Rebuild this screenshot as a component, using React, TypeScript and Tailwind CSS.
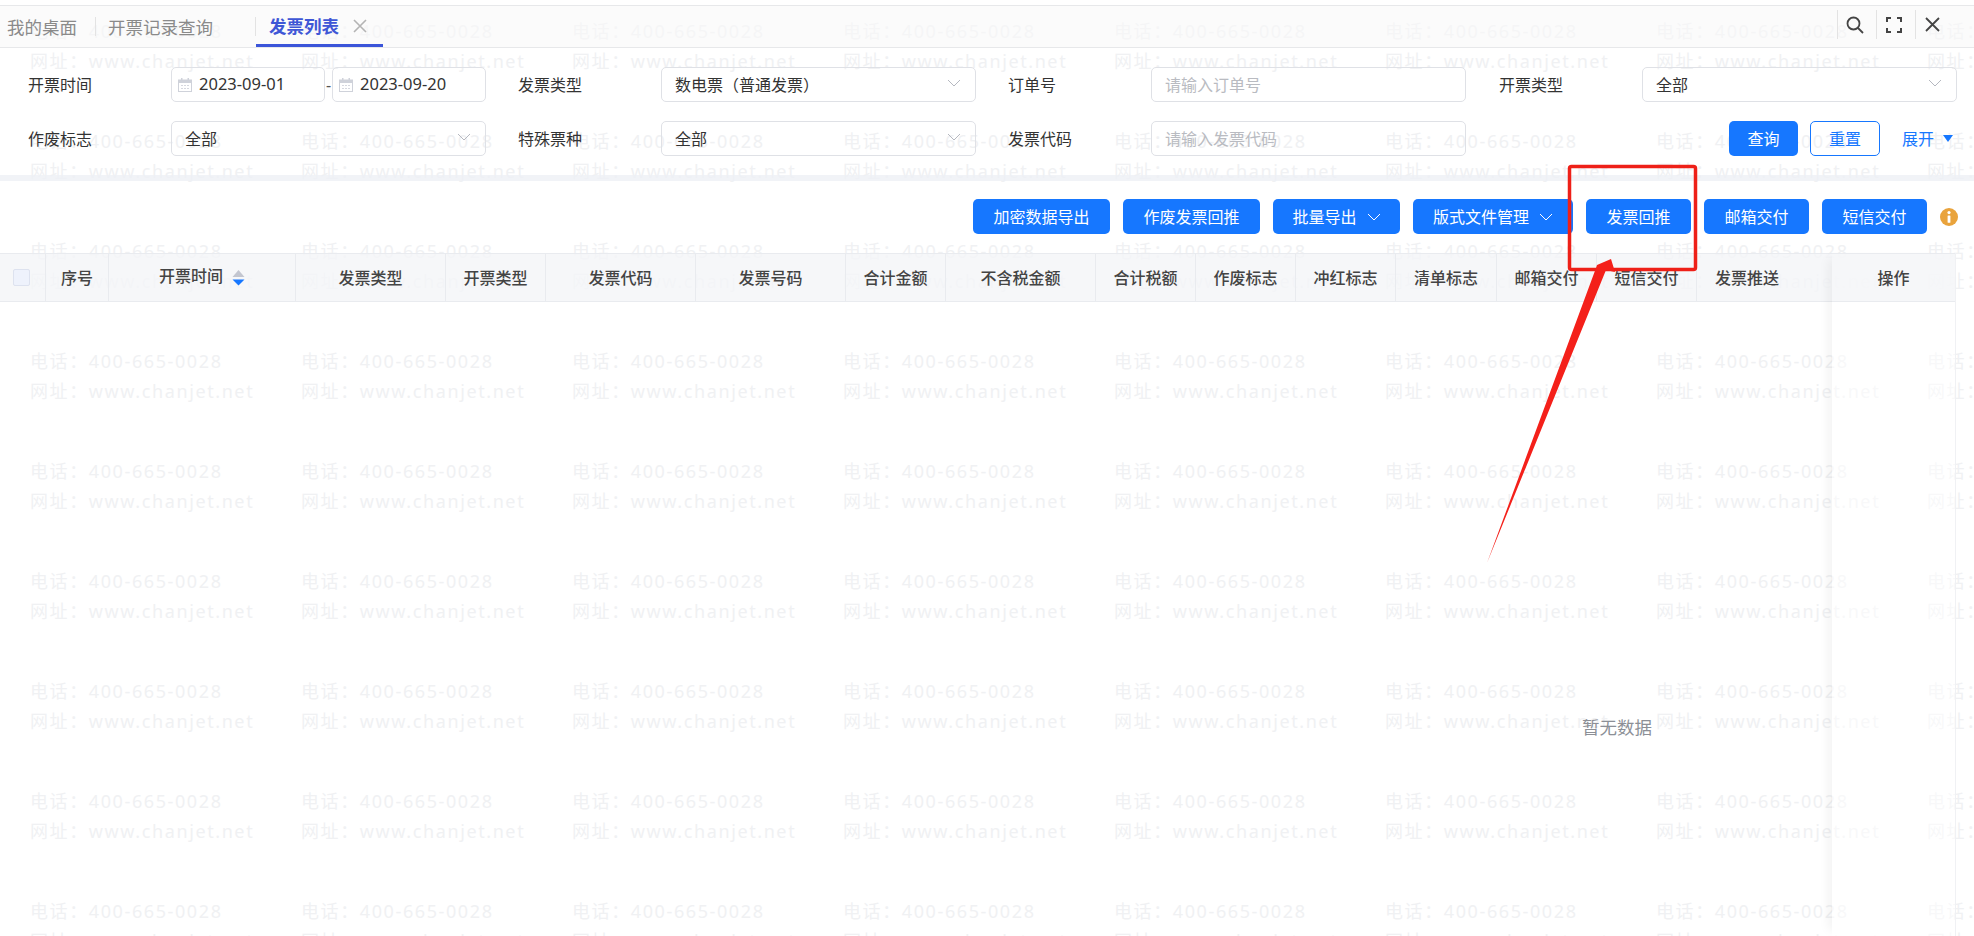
import React from "react";

const FONT = "font-['Noto_Sans','Noto_Sans_CJK_SC',sans-serif]";

function Chevron({ className = "" }: { className?: string }) {
  return (
    <svg width="14" height="8" viewBox="0 0 14 8" fill="none" className={className}>
      <path d="M1 1l6 6 6-6" stroke="currentColor" strokeWidth="1" />
    </svg>
  );
}

function CalendarIcon() {
  return (
    <svg width="14" height="14" viewBox="0 0 14 14" className="shrink-0">
      <rect x="0.5" y="2" width="13" height="11.5" fill="none" stroke="#cfd2da" />
      <rect x="0.5" y="2" width="13" height="3" fill="#cfd2da" />
      <rect x="3" y="0" width="1.5" height="3" fill="#cfd2da" />
      <rect x="9.5" y="0" width="1.5" height="3" fill="#cfd2da" />
      <path d="M3 7.5h2M6 7.5h2M9 7.5h2M3 10.5h2M6 10.5h2M9 10.5h2" stroke="#d6d8df" strokeWidth="1.2" />
    </svg>
  );
}

function DateBox({ value, width }: { value: string; width: string }) {
  return (
    <div className={`flex h-[35px] items-center gap-[7px] rounded-[5px] border border-[#dfe1e6] pl-[6px] text-[16.5px] text-[#333] ${width}`}>
      <CalendarIcon />
      <span>{value}</span>
    </div>
  );
}

function SelectBox({ value }: { value: string }) {
  return (
    <div className="flex h-[35px] w-[315px] items-center justify-between rounded-[5px] border border-[#dfe1e6] pl-[13px] pr-[14px] text-[16px] text-[#333]">
      <span>{value}</span>
      <Chevron className="mb-[3px] text-[#b5b8c0]" />
    </div>
  );
}

function InputBox({ placeholder }: { placeholder: string }) {
  return (
    <div className="flex h-[35px] w-[315px] items-center rounded-[5px] border border-[#dfe1e6] pl-[13px] text-[16px] text-[#b9bbc1]">
      {placeholder}
    </div>
  );
}

function Field({ label, children }: { label: string; children: React.ReactNode }) {
  return (
    <div className="flex items-center">
      <span className="w-[143px] shrink-0 text-[16px] text-[#333]">{label}</span>
      {children}
    </div>
  );
}

function ToolButton({ label, width, menu }: { label: string; width: string; menu?: boolean }) {
  return (
    <button className={`flex h-[35px] items-center justify-center gap-[10px] rounded-[5px] bg-[#1677ff] text-[16px] text-white ${width}`}>
      {label}
      {menu && <Chevron className="text-white" />}
    </button>
  );
}

const columns: { label: string; width: string }[] = [
  { label: "序号", width: "w-[63px]" },
  { label: "开票时间", width: "w-[187px]" },
  { label: "发票类型", width: "w-[150px]" },
  { label: "开票类型", width: "w-[100px]" },
  { label: "发票代码", width: "w-[150px]" },
  { label: "发票号码", width: "w-[150px]" },
  { label: "合计金额", width: "w-[100px]" },
  { label: "不含税金额", width: "w-[150px]" },
  { label: "合计税额", width: "w-[100px]" },
  { label: "作废标志", width: "w-[100px]" },
  { label: "冲红标志", width: "w-[100px]" },
  { label: "清单标志", width: "w-[101px]" },
  { label: "邮箱交付", width: "w-[100px]" },
  { label: "短信交付", width: "w-[100px]" },
  { label: "发票推送", width: "w-[100px]" },
];

function SortIcon() {
  return (
    <svg width="13" height="16" viewBox="0 0 13 16" className="ml-[9px]">
      <path d="M6.5 0L12.5 7H0.5z" fill="#c3c6d0" />
      <path d="M0.5 9.5H12.5L6.5 15.5z" fill="#1677ff" />
    </svg>
  );
}

function Watermark() {
  const tiles = Array.from({ length: 72 });
  return (
    <div className="absolute left-[30px] top-[16px] flex w-[2200px] flex-wrap">
      {tiles.map((_, i) => (
        <div key={i} className="flex h-[110px] w-[271px] flex-col text-[18px] leading-[30px] tracking-[1.6px] text-[#f0f1f3]">
          <span>电话：400-665-0028</span>
          <span>网址：www.chanjet.net</span>
        </div>
      ))}
    </div>
  );
}

export default function App() {
  return (
    <div className={`relative h-[936px] w-[1974px] overflow-hidden bg-white ${FONT}`}>
      <Watermark />

      <div className="relative flex h-full flex-col">
        {/* tab bar */}
        <div className="mt-[5px] flex h-[43px] shrink-0 items-center border-y border-[#e7e8ea] bg-[#f8f8f9]/60 pl-[7px] text-[17.5px] text-[#8a8a8a]">
          <span className="w-[88px] mt-[1px]">我的桌面</span>
          <span className="h-[19px] w-px bg-[#e3e3e3]" />
          <span className="ml-[12px] w-[147px] mt-[1px]">开票记录查询</span>
          <span className="h-[19px] w-px bg-[#e3e3e3]" />
          <div className="flex h-full w-[127px] items-center border-b-[3px] border-[#3b55d9] pl-[13px] pt-[2px]">
            <span className="font-bold text-[#3f57d6]">发票列表</span>
            <svg width="14" height="14" viewBox="0 0 14 14" className="ml-[14px]">
              <path d="M1 1l12 12M13 1L1 13" stroke="#b4b4b4" strokeWidth="1.6" />
            </svg>
          </div>
          <div className="ml-auto mr-[34px] mb-[4px] flex items-center text-[#444]">
            <span className="h-[29px] w-px bg-[#e3e3e3]" />
            <svg width="18" height="18" viewBox="0 0 18 18" className="ml-[8px]" fill="none" stroke="#444" strokeWidth="1.8">
              <circle cx="7.5" cy="7.5" r="6" />
              <path d="M12 12l5 5" />
            </svg>
            <span className="ml-[12px] h-[29px] w-px bg-[#e3e3e3]" />
            <svg width="16" height="16" viewBox="0 0 16 16" className="ml-[9px]" fill="none" stroke="#444" strokeWidth="2">
              <path d="M1 5V1h4M11 1h4v4M15 11v4h-4M5 15H1v-4" />
            </svg>
            <span className="ml-[13px] h-[29px] w-px bg-[#e3e3e3]" />
            <svg width="15" height="15" viewBox="0 0 15 15" className="ml-[9px]" fill="none" stroke="#444" strokeWidth="1.8">
              <path d="M1 1l13 13M14 1L1 14" />
            </svg>
          </div>
        </div>

        {/* filters */}
        <div className="flex h-[127px] shrink-0 flex-col gap-[19px] pl-[28px] pt-[19px]">
          <div className="grid grid-cols-[490px_490px_491px_458px]">
            <Field label="开票时间">
              <div className="flex items-center">
                <DateBox value="2023-09-01" width="w-[154px]" />
                <span className="w-[7px] text-center text-[16px] text-[#555]">-</span>
                <DateBox value="2023-09-20" width="w-[154px]" />
              </div>
            </Field>
            <Field label="发票类型">
              <SelectBox value="数电票（普通发票）" />
            </Field>
            <Field label="订单号">
              <InputBox placeholder="请输入订单号" />
            </Field>
            <Field label="开票类型">
              <SelectBox value="全部" />
            </Field>
          </div>
          <div className="grid grid-cols-[490px_490px_491px_458px]">
            <Field label="作废标志">
              <SelectBox value="全部" />
            </Field>
            <Field label="特殊票种">
              <SelectBox value="全部" />
            </Field>
            <Field label="发票代码">
              <InputBox placeholder="请输入发票代码" />
            </Field>
            <div className="flex items-center pl-[230px]">
              <button className="h-[35px] w-[69px] rounded-[5px] bg-[#1677ff] text-[16px] text-white">查询</button>
              <button className="ml-[12px] h-[35px] w-[70px] rounded-[5px] border border-[#1677ff] text-[16px] text-[#1677ff]">重置</button>
              <span className="ml-[22px] text-[16px] text-[#1677ff]">展开</span>
              <svg width="10" height="7" viewBox="0 0 10 7" className="ml-[9px]">
                <path d="M0 0h10L5 7z" fill="#1677ff" />
              </svg>
            </div>
          </div>
        </div>

        <div className="h-[6px] shrink-0 bg-[#eef0f5]/80" />

        {/* toolbar */}
        <div className="flex h-[72px] shrink-0 items-start gap-[13px] pl-[973px] pt-[18px]">
          <ToolButton label="加密数据导出" width="w-[137px]" />
          <ToolButton label="作废发票回推" width="w-[137px]" />
          <ToolButton label="批量导出" width="w-[127px]" menu />
          <ToolButton label="版式文件管理" width="w-[160px]" menu />
          <ToolButton label="发票回推" width="w-[105px]" />
          <ToolButton label="邮箱交付" width="w-[105px]" />
          <ToolButton label="短信交付" width="w-[105px]" />
          <svg width="18" height="18" viewBox="0 0 18 18" className="mt-[9px]">
            <circle cx="9" cy="9" r="9" fill="#e9a33c" />
            <circle cx="9" cy="4.6" r="1.6" fill="#fff" />
            <rect x="7.6" y="7.4" width="2.8" height="7.4" rx="0.6" fill="#fff" />
          </svg>
        </div>

        {/* table */}
        <div className="flex min-h-0 flex-1 pr-[18px]">
          <div className="flex min-w-0 flex-1 flex-col">
            <div className="flex h-[49px] shrink-0 border-y border-[#e9ebef] bg-[#f4f5f8]/80 text-[16px] font-medium text-[#444]">
              <div className="flex w-[46px] shrink-0 items-center border-r border-[#e9ebef] pl-[13px]">
                <span className="h-[17px] w-[17px] rounded-[2px] border border-[#dde2ef] bg-[#eef2fc]" />
              </div>
              {columns.map((c, i) => (
                <div key={c.label} className={`flex shrink-0 items-center justify-center ${c.width} ${i < columns.length - 1 ? "border-r border-[#e9ebef]" : ""}`}>
                  <span className={i === 1 ? "mb-[3px]" : ""}>{c.label}</span>
                  {i === 1 && <SortIcon />}
                </div>
              ))}
            </div>
            <div className="flex flex-1 justify-end pr-[180px] pt-[412px] text-[17.5px] text-[#8c8f96]">
              <span>暂无数据</span>
            </div>
          </div>
          <div className="flex w-[124px] shrink-0 flex-col border-r border-[#f0f1f4] bg-white/50 shadow-[-10px_0_10px_-6px_rgba(0,0,0,0.05)]">
            <div className="flex h-[49px] shrink-0 items-center justify-center border-y border-[#e9ebef] bg-[#f4f5f8]/80 text-[16px] font-medium text-[#444]">
              操作
            </div>
          </div>
        </div>
      </div>

      {/* red annotation */}
      <svg width="1974" height="936" viewBox="0 0 1974 936" className="pointer-events-none absolute left-0 top-0">
        <rect x="1569.5" y="166.5" width="126" height="103" rx="2" fill="none" stroke="#ee2018" strokeWidth="3.5" />
        <path d="M1611 259L1615 272L1606 270L1487 563L1596 268L1597 265z" fill="#f4201a" />
      </svg>
    </div>
  );
}
